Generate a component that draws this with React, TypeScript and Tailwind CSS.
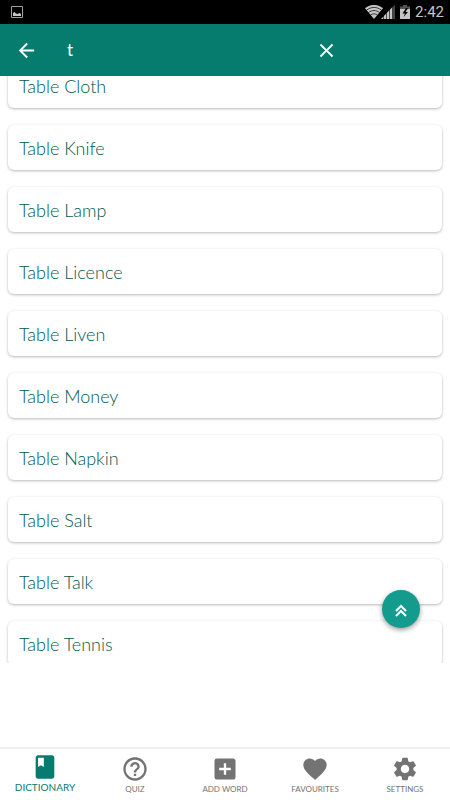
import { useState } from "react";
import type { IconType } from "react-icons";
import {
	MdAddBox,
	MdArrowBack,
	MdBook,
	MdClose,
	MdFavorite,
	MdHelpOutline,
	MdSettings,
} from "react-icons/md";

interface Tab {
	name: string;
	icon: IconType;
}

const words = [
	"Table Cloth",
	"Table Knife",
	"Table Lamp",
	"Table Licence",
	"Table Liven",
	"Table Money",
	"Table Napkin",
	"Table Salt",
	"Table Talk",
	"Table Tennis",
];

const tabs: Tab[] = [
	{ name: "DICTIONARY", icon: MdBook },
	{ name: "QUIZ", icon: MdHelpOutline },
	{ name: "ADD WORD", icon: MdAddBox },
	{ name: "FAVOURITES", icon: MdFavorite },
	{ name: "SETTINGS", icon: MdSettings },
];

const StatusBar = () => (
	<div className="flex h-6 shrink-0 items-center justify-between bg-black pl-[11px] pr-1.5 text-[#c4c4c4]">
		<svg width="12" height="12" viewBox="0 0 12 12">
			<path d="M.5.5h11v11H.5z" fill="none" stroke="#a0a0a0" />
			<path d="M2 10V7l1.500-1L5 7.500 6.500 8 8.500 7 10 8v2z" fill="currentColor" />
		</svg>
		<div className="flex items-center">
			{/* wifi */}
			<svg width="18" height="14" viewBox="0 0 18 14">
				<path d="M9 14 0 3.2C5 -1.1 13 -1.1 18 3.2z" fill="currentColor" />
				<g fill="none" stroke="#000" strokeWidth=".7">
					<path d="M1.5 5.2C6 1.5 12 1.5 16.5 5.2" />
					<path d="M3.500 7.600C7 4.800 11 4.800 14.500 7.600" />
					<path d="M5.500 10C7.500 8.400 10.500 8.400 12.500 10" />
				</g>
			</svg>
			{/* signal */}
			<svg width="14" height="14" viewBox="0 0 14 14" className="-ml-0.5">
				<path d="M0 14 11 2.500V14z" fill="currentColor" />
				<path d="M11 14V2.500L14 0v14z" fill="#444" />
				<path d="M2.500 10v4M5.500 7v7M8.500 4v10" stroke="#000" strokeWidth=".6" />
			</svg>
			{/* battery */}
			<svg width="10" height="14" viewBox="0 0 10 14" className="ml-[5px]">
				<path d="M3 0h4v1.500h3V4H0V1.500h3z" fill="#555" />
				<path d="M0 4h10v10H0z" fill="currentColor" />
				<path d="M6 3 2.500 8.500H5L3.500 12 8 7H5.500L8 3z" fill="#000" />
			</svg>
			<span className="ml-[5px] font-[Roboto,sans-serif] text-[15px] leading-6">2:42</span>
		</div>
	</div>
);

const App = () => {
	const [query, setQuery] = useState("t");
	const [active, setActive] = useState("DICTIONARY");

	return (
		<div className="flex h-screen flex-col bg-white font-[Lato,sans-serif]">
			<StatusBar />

			{/* ----- Search Bar ----- */}
			<header className="flex h-[52px] shrink-0 items-center bg-[#067c6f] pl-[15px] text-white">
				<button type="button" aria-label="Back">
					<MdArrowBack size={23} />
				</button>
				<input
					type="text"
					aria-label="Search"
					value={query}
					onChange={(e) => setQuery(e.target.value)}
					className="ml-[29px] min-w-0 flex-1 bg-transparent text-[17px] outline-none"
				/>
				<button type="button" aria-label="Clear" onClick={() => setQuery("")} className="mr-[25%] pr-[3px]">
					<MdClose size={23} />
				</button>
			</header>

			{/* ----- Word List ----- */}
			<main className="relative min-h-0 flex-1">
				<div className="h-full overflow-hidden px-2">
					<ul className="-mt-[13px] flex flex-col gap-[17px]">
						{words.map((word) => (
							<li
								key={word}
								className="flex h-[45px] shrink-0 items-center rounded-md bg-white px-[11px] text-lg font-light text-[#00594d] shadow-[0_1px_3px_rgba(0,0,0,0.28)]"
							>
								{word}
							</li>
						))}
					</ul>
				</div>
				<button
					type="button"
					aria-label="Scroll to top"
					className="absolute bottom-[35px] right-[30px] flex size-[38px] items-center justify-center rounded-full bg-[#139c8e] pt-1 text-white shadow-[0_2px_5px_rgba(0,0,0,0.4)]"
				>
					<svg width="14" height="14" viewBox="0 0 14 14" fill="none" stroke="currentColor" strokeWidth="2">
						<path d="m2 7 5-5 5 5M2 12l5-5 5 5" />
					</svg>
				</button>
			</main>

			{/* space kept for the banner */}
			<div className="h-[84px] shrink-0" />

			{/* ----- Tabs ----- */}
			<nav className="grid h-[53px] shrink-0 grid-cols-5 border-t-2 border-[#f0f0f0]">
				{tabs.map(({ name, icon: Icon }) => (
					<button
						key={name}
						type="button"
						onClick={() => setActive(name)}
						className={
							name === active
								? "flex flex-col items-center pt-1 text-[10px] leading-3 text-[#067c6f]"
								: "flex flex-col items-center pt-1.5 text-[8px] leading-3 text-[#737373]"
						}
					>
						<Icon size={28} />
						<span>{name}</span>
					</button>
				))}
			</nav>
		</div>
	);
};

export default App;
